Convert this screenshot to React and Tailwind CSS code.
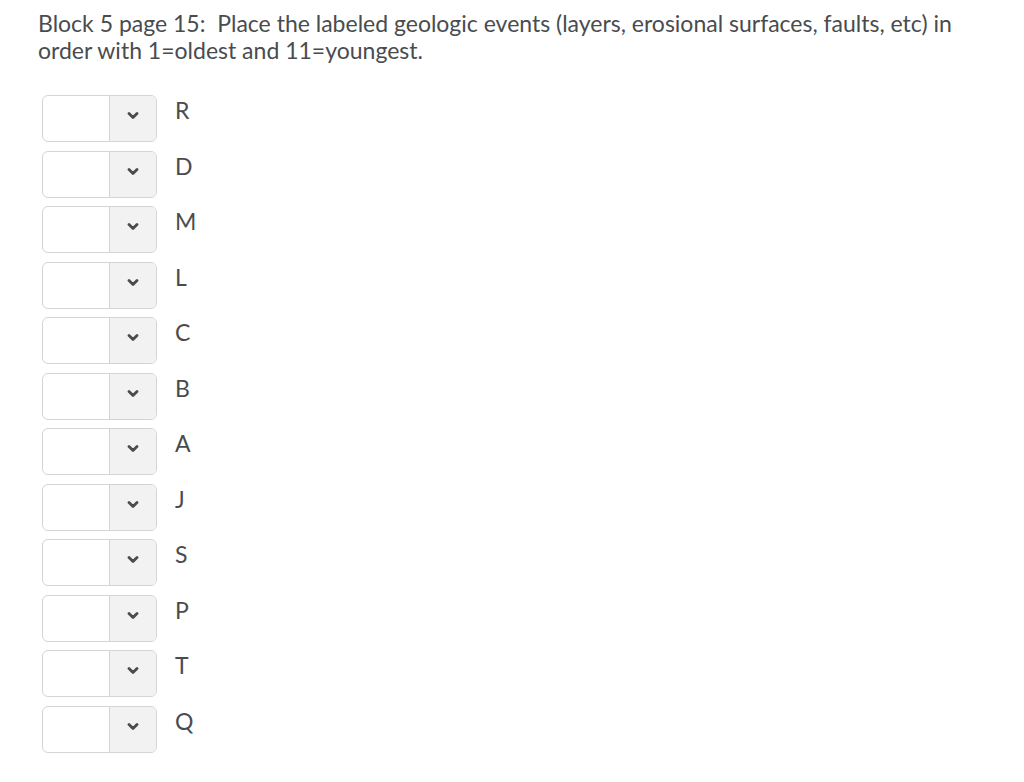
import React from 'react';

const labels = ['R', 'D', 'M', 'L', 'C', 'B', 'A', 'J', 'S', 'P', 'T', 'Q'];

function Chevron() {
  return (
    <svg width="12" height="8" viewBox="0 0 12 8" className="block">
      <path d="M2 1.5 L6 5.5 L10 1.5" fill="none" stroke="#494c4e" strokeWidth="2.8" strokeLinecap="round" strokeLinejoin="round" />
    </svg>
  );
}

function SelectRow({ label }) {
  return (
    <div className="flex items-start">
      <div className="flex h-[47px] w-[115px] rounded-[6px] border border-[#d4d4d4] bg-white overflow-hidden">
        <div className="flex-1 border-r border-[#d4d4d4]" />
        <div className="w-[46px] bg-[#f2f2f2] flex items-center justify-center pb-[5px]">
          <Chevron />
        </div>
      </div>
      <div className="ml-[18px] pt-[2px] text-[23px] leading-[27px] text-[#494c4e]">{label}</div>
    </div>
  );
}

export default function App() {
  return (
    <div className="min-h-screen bg-white pl-[38px] pt-[10px]" style={{ fontFamily: 'Lato, "Open Sans", sans-serif' }}>
      <p className="text-[23px] leading-[27px] text-[#494c4e] max-w-[945px]">
        Block 5 page 15:&nbsp; Place the labeled geologic events (layers, erosional surfaces, faults, etc) in order with 1=oldest and 11=youngest.
      </p>
      <div className="mt-[31px] ml-[4px] flex flex-col gap-[8.5px]">
        {labels.map((l) => (
          <SelectRow key={l} label={l} />
        ))}
      </div>
    </div>
  );
}
